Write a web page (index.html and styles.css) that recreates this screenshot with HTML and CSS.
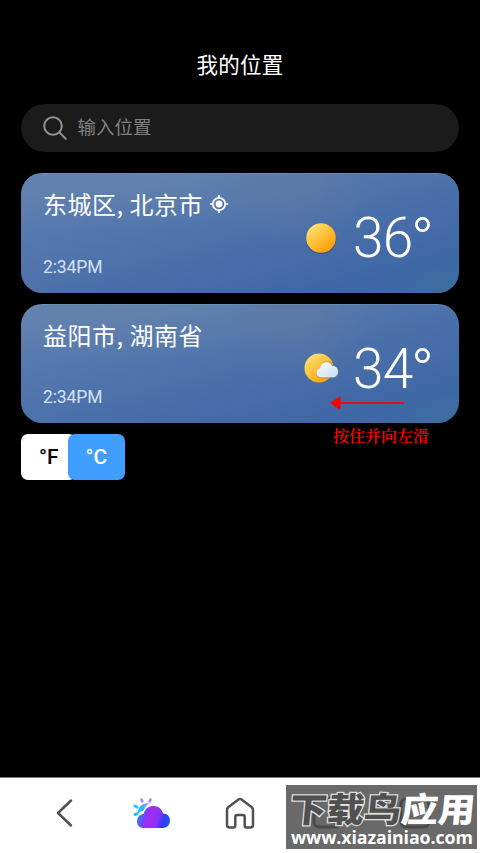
FILE: index.html
```html
<!DOCTYPE html>
<html lang="zh-CN">
<head>
<meta charset="utf-8">
<title>我的位置</title>
<link rel="stylesheet" href="styles.css">
</head>
<body>
<main class="screen">
  <h1 class="title">我的位置</h1>
  <div class="search">
    <svg class="search-icon" width="24" height="24" viewBox="0 0 24 24"><circle cx="10" cy="10" r="8.8"/><path d="M16.4 16.4 22.7 22.7"/></svg>
    <span class="search-text">输入位置</span>
  </div>
  <section class="card">
    <div class="place">
      <div class="city">东城区, 北京市 <svg class="locate" width="20" height="20" viewBox="0 0 20 20"><circle cx="10" cy="10" r="6.2"/><path d="M10 .9v3M10 16.1v3M.9 10h3M16.1 10h3"/><circle class="dot" cx="10" cy="10" r="3.4"/></svg></div>
      <div class="time">2:34PM</div>
    </div>
    <svg class="weather" width="38" height="36" viewBox="0 0 38 36">
      <defs><linearGradient id="sun" x1=".15" y1=".1" x2=".8" y2=".9"><stop offset="0" stop-color="#ffe070"/><stop offset=".5" stop-color="#ffc03a"/><stop offset="1" stop-color="#ff9d08"/></linearGradient></defs>
      <circle cx="19" cy="18.7" r="15.2" fill="#37485f" opacity=".6"/><circle cx="19" cy="18" r="14.8" fill="url(#sun)"/>
    </svg>
    <div class="temp">36<span class="deg">°</span></div>
  </section>
  <section class="card">
    <div class="place">
      <div class="city">益阳市, 湖南省</div>
      <div class="time">2:34PM</div>
    </div>
    <svg class="weather" width="38" height="36" viewBox="0 0 38 36">
      <defs><linearGradient id="cloud" x1="0" y1="0" x2="1" y2="1"><stop offset="0" stop-color="#fff"/><stop offset="1" stop-color="#c5def3"/></linearGradient></defs>
      <circle cx="17" cy="18" r="14.5" fill="url(#sun)"/>
      <path d="M19 28.500c-3.500 0-5.400-2.500-5-5.500.3-2.500 1.700-4.500 4-5 .8-4.500 3.600-7 7-7 3.500 0 5.700 2 6.500 5 3.500-.2 5.700 2.500 5.700 6 0 4-2.200 6.500-5.700 6.500z" fill="#9b8050" opacity=".4"/>
      <path d="M19 27.200c-2.800 0-4.700-2-4.500-4.700.2-2.300 1.600-3.800 3.600-4.200.6-3.900 3-6.100 6.200-6.100 3 0 4.800 1.400 5.700 3.800 3.800-.3 6 2.200 6 5.400 0 3.700-2.200 5.800-5.500 5.800z" fill="url(#cloud)"/>
    </svg>
    <div class="temp">34<span class="deg">°</span></div>
    <div class="hint">
      <svg class="arrow" width="75" height="14" viewBox="0 0 75 14"><path d="M0 7 10.500 0v14z" fill="#f00"/><path d="M10 7h64" stroke="#dc1122" stroke-width="2"/></svg>
      <div class="hint-text">按住并向左滑</div>
    </div>
  </section>
  <div class="units"><span class="unit">°F</span><span class="unit active">°C</span></div>
</main>
<nav class="bar">
  <svg class="nav-icon back" width="18" height="30" viewBox="0 0 18 30"><path d="M16 2.500 3 15l13 12.500"/></svg>
  <svg class="brand" width="38" height="32" viewBox="0 0 38 32">
    <defs>
      <linearGradient id="bc" x1="0" y1=".5" x2="1" y2=".7"><stop offset="0" stop-color="#168cff"/><stop offset=".22" stop-color="#7d3cf5"/><stop offset=".4" stop-color="#a52bee"/><stop offset=".62" stop-color="#8a32f3"/><stop offset=".8" stop-color="#2b3dfd"/><stop offset="1" stop-color="#1f54ff"/></linearGradient>
      <linearGradient id="bs" x1="0" y1="1" x2="1" y2="0"><stop offset="0" stop-color="#18c4ff"/><stop offset=".5" stop-color="#38b3ff"/><stop offset="1" stop-color="#a58bff"/></linearGradient>
    </defs>
    <path d="M5 17C4.500 10 9 5.500 17 6.500c-4 1.500-5.500 4-6.200 7C8.500 14 6.500 15 5 17z" fill="url(#bs)"/>
    <path d="M2 9l2 1M2 17.500l2-.8" stroke="#1fc3ff" stroke-width="3" stroke-linecap="round"/><path d="M8.500 2.500l.8 2M17.500 2.500l-.8 2" stroke="#a68bf8" stroke-width="2.600" stroke-linecap="round"/>
    <path d="M10.500 31C6 31 4 28 4 24.500c0-4 2.500-7 6.500-7.500C12 11.500 16 9 20.500 9c5 0 8.500 3 9.500 7.500 4.500 0 7 3.300 7 7 0 4.500-3 7.500-7.500 7.500z" fill="url(#bc)"/>
  </svg>
  <svg class="nav-icon" width="30" height="32" viewBox="0 0 30 32"><path d="M3.500 10 13.500 2.500q1.500-1 3 0L26.500 10Q28 11.200 28 13V28q0 2.500-2.500 2.500h-4q-1.800 0-1.800-2V20q0-2-2-2h-5.400q-2 0-2 2v8.500q0 2-2 2h-3.800Q2 30.500 2 28V13q0-1.800 1.500-3z"/></svg>
</nav>
<aside class="mark">
  <svg class="mark-shapes" width="191" height="64" viewBox="0 0 191 64"><rect x="28" y="14" width="26" height="28" rx="5"/><rect x="115" y="14" width="28" height="28" rx="5"/></svg>
  <div class="mark-name"><span class="outlined">下载鸟</span><span>应用</span></div>
  <div class="mark-url">www.xiazainiao.com</div>
</aside>
</body>
</html>
```
FILE: styles.css
```css
* { box-sizing: border-box; }
body {
  margin: 0;
  position: relative;
  width: 480px;
  height: 853px;
  display: flex;
  flex-direction: column;
  overflow: hidden;
  background: #000;
  color: #fff;
  font-family: Roboto, "Noto Sans CJK SC", sans-serif;
}
.screen { height: 777px; padding: 50px 21.400px 0; }
.title { margin: 0 0 22px; height: 32px; font-size: 21.500px; line-height: 32px; font-weight: 400; text-align: center; letter-spacing: .3px; }
.search { height: 47.700px; padding: 0 21.600px; display: flex; align-items: center; gap: 10.500px; border-radius: 24px; background: #1b1b1b; color: #808080; font-size: 18.500px; margin-bottom: 21.500px; }
.search-icon { fill: none; stroke: #919191; stroke-width: 2; stroke-linecap: round; }
.search-text { position: relative; top: -2px; }
.card {
  position: relative;
  height: 119.500px;
  margin-bottom: 11px;
  padding: 0 27px 0 21.500px;
  display: flex;
  border-radius: 21px;
  box-shadow: inset 0 1px 0 rgba(130, 160, 190, .4);
  background:
    radial-gradient(ellipse 75px 55px at 63% 18%, rgba(100, 119, 158, .5), transparent),
    radial-gradient(ellipse 80px 50px at 100% 100%, rgba(57, 116, 157, .5), transparent),
    radial-gradient(ellipse 280px 60px at 25% 0, rgba(105, 135, 170, .6), transparent),
    linear-gradient(165deg, #6180b1 0%, #4e73ac 45%, #3e67a5 85%, #4069a5 100%);
}
.place { flex: 1; display: flex; flex-direction: column; }
.city { height: 35px; margin-top: 13px; font-family: "Noto Sans CJK SC", sans-serif; font-size: 24px; line-height: 36px; letter-spacing: .5px; white-space: pre; }
.locate { fill: none; stroke: #fff; stroke-width: 1.700; vertical-align: 0; margin-left: .5px; }
.locate .dot { fill: #fff; stroke: none; }
.time { margin-top: 35.500px; font-size: 17.500px; line-height: 21px; letter-spacing: -.1px; color: #d5e0f3; }
.weather { margin-top: 46.500px; }
.temp { width: 92px; padding-left: 13.500px; margin-top: 32px; font-size: 55px; line-height: 66px; font-weight: 300; letter-spacing: -.9px; white-space: nowrap; }
.deg { position: relative; top: 4px; left: -1.500px; font-size: 62px; line-height: 0; }
.hint { position: absolute; left: 308.500px; top: 92px; width: 110px; }
.arrow { display: block; }
.hint-text { margin: 16px 0 0 3px; color: #f00; font: 600 16px/22px "Liberation Serif", "Noto Serif CJK SC", "Noto Sans CJK SC", serif; }
.units { display: flex; font-size: 21px; line-height: 46px; font-weight: 500; text-align: center; }
.unit { width: 55px; height: 45.500px; border-radius: 7px; background: #fff; color: #000; }
.active { width: 57px; margin-left: -8.500px; background: #409eff; color: #fff; }
.bar { height: 76px; padding: 5px 0 10px 55px; display: flex; align-items: center; background: #fff; border-top: 1px solid #777; }
.nav-icon { fill: none; stroke: #505050; stroke-width: 2.500; stroke-linecap: round; stroke-linejoin: round; }
.brand { margin: 0 54px 0 60px; }
.mark { position: absolute; left: 286px; top: 785px; width: 191px; height: 64px; background: #696969; overflow: hidden; }
.mark-shapes { position: absolute; left: 0; top: 0; fill: none; stroke: #484848; stroke-width: 3; }
.mark-name { position: relative; height: 42px; padding-left: 4px; font-size: 34px; line-height: 51px; font-weight: 900; white-space: nowrap; transform-origin: 0 50%; transform: scaleX(1.09) skewX(-5deg); }
.outlined { color: #505050; -webkit-text-stroke: 2.500px #ddd; paint-order: stroke fill; }
.mark-url { position: relative; padding-left: 5px; font: 700 17.800px/21px "Open Sans", "Noto Sans", sans-serif; letter-spacing: -.1px; white-space: nowrap; }
```
